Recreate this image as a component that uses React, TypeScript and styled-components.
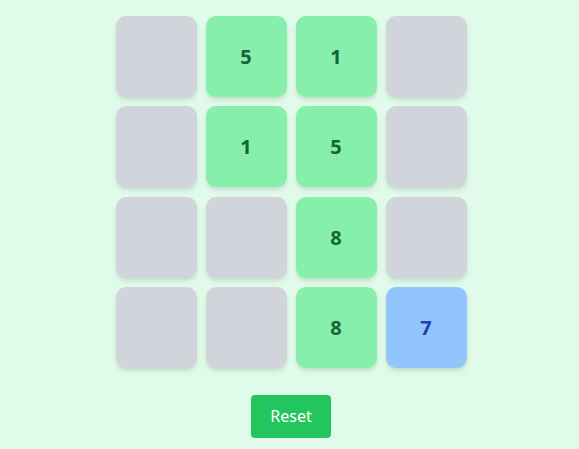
import React, { useState } from "react";
import styled, { createGlobalStyle } from "styled-components";

const Global = createGlobalStyle`
  html, body { margin: 0; padding: 0; background: #e0fbe9; }
  body { font-family: "Noto Sans", "Open Sans", sans-serif; }
`;

const Page = styled.div`
  min-height: 449px;
  display: flex;
  flex-direction: column;
  align-items: center;
  padding: 16px 0 0 3px;
  box-sizing: border-box;
  background: #e0fbe9;
`;

const Board = styled.div`
  display: grid;
  grid-template-columns: repeat(4, 81px);
  grid-auto-rows: 81px;
  column-gap: 9px;
  row-gap: 9.3px;
`;

type Kind = "empty" | "green" | "blue";

const bg: Record<Kind, string> = { empty: "#d1d5db", green: "#86efac", blue: "#93c5fd" };
const fg: Record<Kind, string> = { empty: "#374151", green: "#166534", blue: "#1e40af" };

const Tile = styled.div<{ $kind: Kind }>`
  border-radius: 10px;
  background: ${(p) => bg[p.$kind]};
  color: ${(p) => fg[p.$kind]};
  display: flex;
  align-items: center;
  justify-content: center;
  font-size: 20px;
  font-weight: 700;
  box-shadow: 0 4px 6px -1px rgba(0, 0, 0, 0.1), 0 2px 4px -2px rgba(0, 0, 0, 0.1);
`;

const ResetButton = styled.button`
  margin-top: 27px;
  height: 43px;
  padding: 0 19.5px;
  border: none;
  border-radius: 4px;
  background: #22c55e;
  color: #ffffff;
  font-family: "Noto Sans", "Open Sans", sans-serif;
  font-size: 16px;
  cursor: pointer;
`;

const initial: (number | null)[] = [
  null, 5, 1, null,
  null, 1, 5, null,
  null, null, 8, null,
  null, null, 8, 7,
];

export default function App() {
  const [cells, setCells] = useState(initial);
  return (
    <>
      <Global />
      <Page>
        <Board>
          {cells.map((v, i) => {
            const kind: Kind = v === null ? "empty" : v === 7 ? "blue" : "green";
            return (
              <Tile key={i} $kind={kind}>
                {v ?? ""}
              </Tile>
            );
          })}
        </Board>
        <ResetButton onClick={() => setCells(initial)}>Reset</ResetButton>
      </Page>
    </>
  );
}
